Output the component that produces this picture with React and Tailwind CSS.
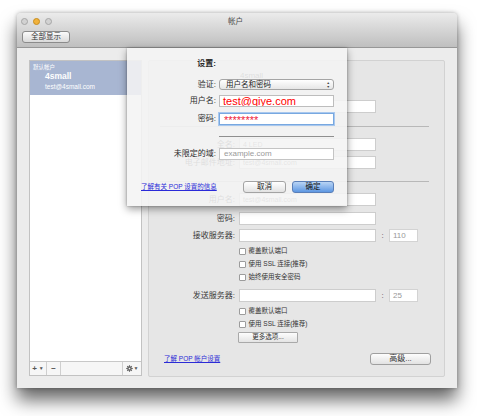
import React from "react";

const Field = ({ label, value, className = "", port }) => (
  <div className={`flex items-center h-[13px] ${className}`}>
    <div className="w-[90px] pr-[4px] text-right text-[8px] leading-none text-[#3a3a3a]">{label}</div>
    <div className="w-[137px] h-[13px] bg-white border border-[#cdcdcd] flex items-center px-[3px] text-[7px] leading-none text-[#777]">
      {value}
    </div>
    {port && (
      <>
        <div className="w-[13px] text-center text-[8px] leading-none text-[#555]">:</div>
        <div className="w-[29px] h-[13px] bg-white border border-[#d3d3d3] flex items-center px-[3px] text-[8px] leading-none text-[#999]">
          {port}
        </div>
      </>
    )}
  </div>
);

const Check = ({ label, className = "" }) => (
  <div className={`flex items-center h-[13px] pl-[90px] gap-[2px] ${className}`}>
    <div className="w-[7px] h-[7px] bg-white border border-[#9c9c9c] rounded-[1px]" />
    <span className="text-[6.5px] leading-none text-[#333] pl-[0.5px]">{label}</span>
  </div>
);

const SheetRow = ({ label, children, className = "", bold }) => (
  <div className={`flex items-center ${className}`}>
    <div
      className={`w-[92px] pr-[3px] text-right text-[8px] leading-none text-[#2a2a2a] ${bold ? "font-bold" : ""}`}
    >
      {label}
    </div>
    {children}
  </div>
);

export default function App() {
  return (
    <div className="w-[477px] h-[416px] bg-white pl-[17px] pt-[13px] font-['Liberation_Sans','Noto_Sans_CJK_SC',sans-serif]">
      <div className="relative w-[440px] h-[375px] rounded-t-[4px] bg-[#ececec] shadow-[0_12px_18px_rgba(0,0,0,0.6),0_0_4px_rgba(0,0,0,0.3)] flex flex-col">
        {/* title bar + toolbar */}
        <div className="h-[35px] rounded-t-[4px] bg-gradient-to-b from-[#ebebeb] to-[#bfbfbf] border-b border-[#979797] relative">
          <div className="flex gap-[5px] pl-[4px] pt-[5px]">
            <div className="w-[7px] h-[7px] rounded-full bg-[#d2d2d2] border border-[#a6a6a6]" />
            <div className="w-[7px] h-[7px] rounded-full bg-[#f1b23c] border border-[#c78d1e]" />
            <div className="w-[7px] h-[7px] rounded-full bg-[#d2d2d2] border border-[#a6a6a6]" />
          </div>
          <div className="absolute top-[3px] left-[211px] text-[7.5px] text-[#4a4a4a]">帐户</div>
          <div className="ml-[5px] mt-[6px] w-[48px] h-[12px] rounded-[3px] border border-[#8b8b8b] bg-gradient-to-b from-[#fbfbfb] to-[#dadada] flex items-center justify-center text-[7.5px] leading-none text-[#333]">
            全部显示
          </div>
        </div>

        {/* body */}
        <div className="flex pl-[12px] pt-[12px] gap-[6px]">
          {/* sidebar list */}
          <div className="w-[113px] h-[316px] bg-white border border-[#c2c2c2] flex flex-col">
            <div className="h-[34px] bg-[#a8b6d2] flex flex-col text-white">
              <div className="pl-[3px] pt-[2px] text-[5.5px] leading-[8px]">默认帐户</div>
              <div className="pl-[15px] text-[8.5px] font-bold leading-[11px]">4small</div>
              <div className="pl-[15px] text-[6.5px] leading-[10px]">test@4small.com</div>
            </div>
            <div className="flex-1" />
            <div className="h-[14px] border-t border-[#c8c8c8] bg-[#f6f6f6] flex text-[#555]">
              <div className="w-[17px] border-r border-[#cfcfcf] flex items-center justify-center gap-[2px] text-[8px] leading-none">
                <span className="font-bold">+</span>
                <span className="text-[5px]">▼</span>
              </div>
              <div className="w-[14px] border-r border-[#cfcfcf] flex items-center justify-center text-[8px] font-bold leading-none">
                −
              </div>
              <div className="flex-1 border-r border-[#cfcfcf]" />
              <div className="w-[18px] flex items-center justify-center gap-[1px]">
                <svg width="7" height="7" viewBox="0 0 10 10">
                  <circle cx="5" cy="5" r="3.2" fill="#666" />
                  <g stroke="#666" strokeWidth="1.6">
                    <line x1="5" y1="0.3" x2="5" y2="9.7" />
                    <line x1="0.3" y1="5" x2="9.7" y2="5" />
                    <line x1="1.7" y1="1.7" x2="8.3" y2="8.3" />
                    <line x1="8.3" y1="1.7" x2="1.7" y2="8.3" />
                  </g>
                  <circle cx="5" cy="5" r="1.2" fill="#f6f6f6" />
                </svg>
                <span className="text-[5px] leading-none">▼</span>
              </div>
            </div>
          </div>

          {/* account detail box */}
          <div className="w-[297px] h-[317px] bg-[#e6e6e6] border border-[#d2d2d2] rounded-[2px] flex flex-col">
            <div className="h-[13px] mt-[8px] pl-[91px] flex items-center text-[8px] leading-none text-[#444]">4small</div>
            <Field label="" value="" className="mt-[18px]" />
            <div className="ml-[11px] mt-[13px] w-[269px] h-px bg-[#b8b8b8]" />
            <Field label="全名:" value="4 LED" className="mt-[11px]" />
            <Field label="电子邮件地址:" value="test@4small.com" className="mt-[5px]" />
            <div className="ml-[11px] mt-[12px] w-[269px] h-px bg-[#b8b8b8]" />
            <Field label="用户名:" value="test@4small.com" className="mt-[11px]" />
            <Field label="密码:" value="" className="mt-[6px]" />
            <Field label="接收服务器:" value="" port="110" className="mt-[4px]" />
            <Check label="覆盖默认端口" className="mt-[3px]" />
            <Check label="使用 SSL 连接(推荐)" />
            <Check label="始终使用安全密码" />
            <Field label="发送服务器:" value="" port="25" className="mt-[5px]" />
            <Check label="覆盖默认端口" className="mt-[3px] h-[12px]" />
            <Check label="使用 SSL 连接(推荐)" className="h-[12px]" />
            <div className="ml-[89px] mt-[1px] w-[60px] h-[11px] bg-gradient-to-b from-[#fdfdfd] to-[#e4e4e4] border border-[#a9a9a9] rounded-[1px] flex items-center justify-center text-[6.5px] leading-none text-[#333]">
              更多选项...
            </div>
            <div className="mt-[10px] h-[12px] flex items-center">
              <span className="ml-[15px] text-[6.5px] leading-none text-[#2b2bd6] underline">了解 POP 帐户设置</span>
              <div className="ml-auto mr-[13px] w-[61px] h-[12px] rounded-[3px] bg-gradient-to-b from-[#fdfdfd] to-[#e2e2e2] border border-[#9f9f9f] flex items-center justify-center text-[8px] leading-none text-[#333]">
                高级...
              </div>
            </div>
          </div>
        </div>

        {/* sheet */}
        <div className="absolute left-[110px] top-[35px] w-[220px] h-[158px] bg-[#f4f4f4]/[0.88] shadow-[0_3px_8px_rgba(0,0,0,0.4),0_0_2px_rgba(0,0,0,0.3)] flex flex-col">
          <SheetRow label="设置:" bold className="mt-[11px] h-[10px]" />
          <SheetRow label="验证:" className="mt-[10px]">
            <div className="w-[115px] h-[11px] rounded-[3px] border border-[#a5a5a5] bg-gradient-to-b from-[#ffffff] to-[#e6e6e6] flex items-center justify-between pl-[6px] pr-[3px] text-[7.5px] leading-none text-[#222]">
              <span>用户名和密码</span>
              <span className="flex flex-col text-[3.5px] leading-[4px] text-[#444]">
                <span>▲</span>
                <span>▼</span>
              </span>
            </div>
          </SheetRow>
          <SheetRow label="用户名:" className="mt-[5px]">
            <div className="w-[115px] h-[12px] bg-white border border-[#bdbdbd] flex items-center pl-[3px] text-[11px] leading-none text-[#ff0000] overflow-hidden">
              test@qiye.com
            </div>
          </SheetRow>
          <SheetRow label="密码:" className="mt-[6px]">
            <div className="w-[115px] h-[12px] bg-white border border-[#78a8e0] shadow-[0_0_0_1px_#a9c8ee] flex items-start pl-[4px] text-[11px] leading-[12px] text-[#f0203a] overflow-hidden">
              ********
            </div>
          </SheetRow>
          <div className="ml-[92px] mt-[11px] w-[115px] h-px bg-[#8f8f8f]" />
          <SheetRow label="未限定的域:" className="mt-[11px]">
            <div className="w-[115px] h-[12px] bg-white border border-[#c4c4c4] flex items-center pl-[4px] text-[8px] leading-none text-[#9a9a9a]">
              example.com
            </div>
          </SheetRow>
          <div className="mt-[21px] h-[12px] flex items-center">
            <span className="ml-[14px] text-[6.5px] leading-none text-[#2a2ad8] underline">了解有关 POP 设置的信息</span>
            <div className="ml-auto w-[43px] h-[12px] rounded-[3px] bg-gradient-to-b from-[#ffffff] to-[#e2e2e2] border border-[#a3a3a3] flex items-center justify-center text-[7.5px] leading-none text-[#222]">
              取消
            </div>
            <div className="ml-[6px] mr-[13px] w-[42px] h-[12px] rounded-[3px] bg-gradient-to-b from-[#b9d4f4] to-[#5d97e2] border border-[#5a7fb8] flex items-center justify-center text-[7.5px] leading-none text-[#111]">
              确定
            </div>
          </div>
        </div>
      </div>
    </div>
  );
}
